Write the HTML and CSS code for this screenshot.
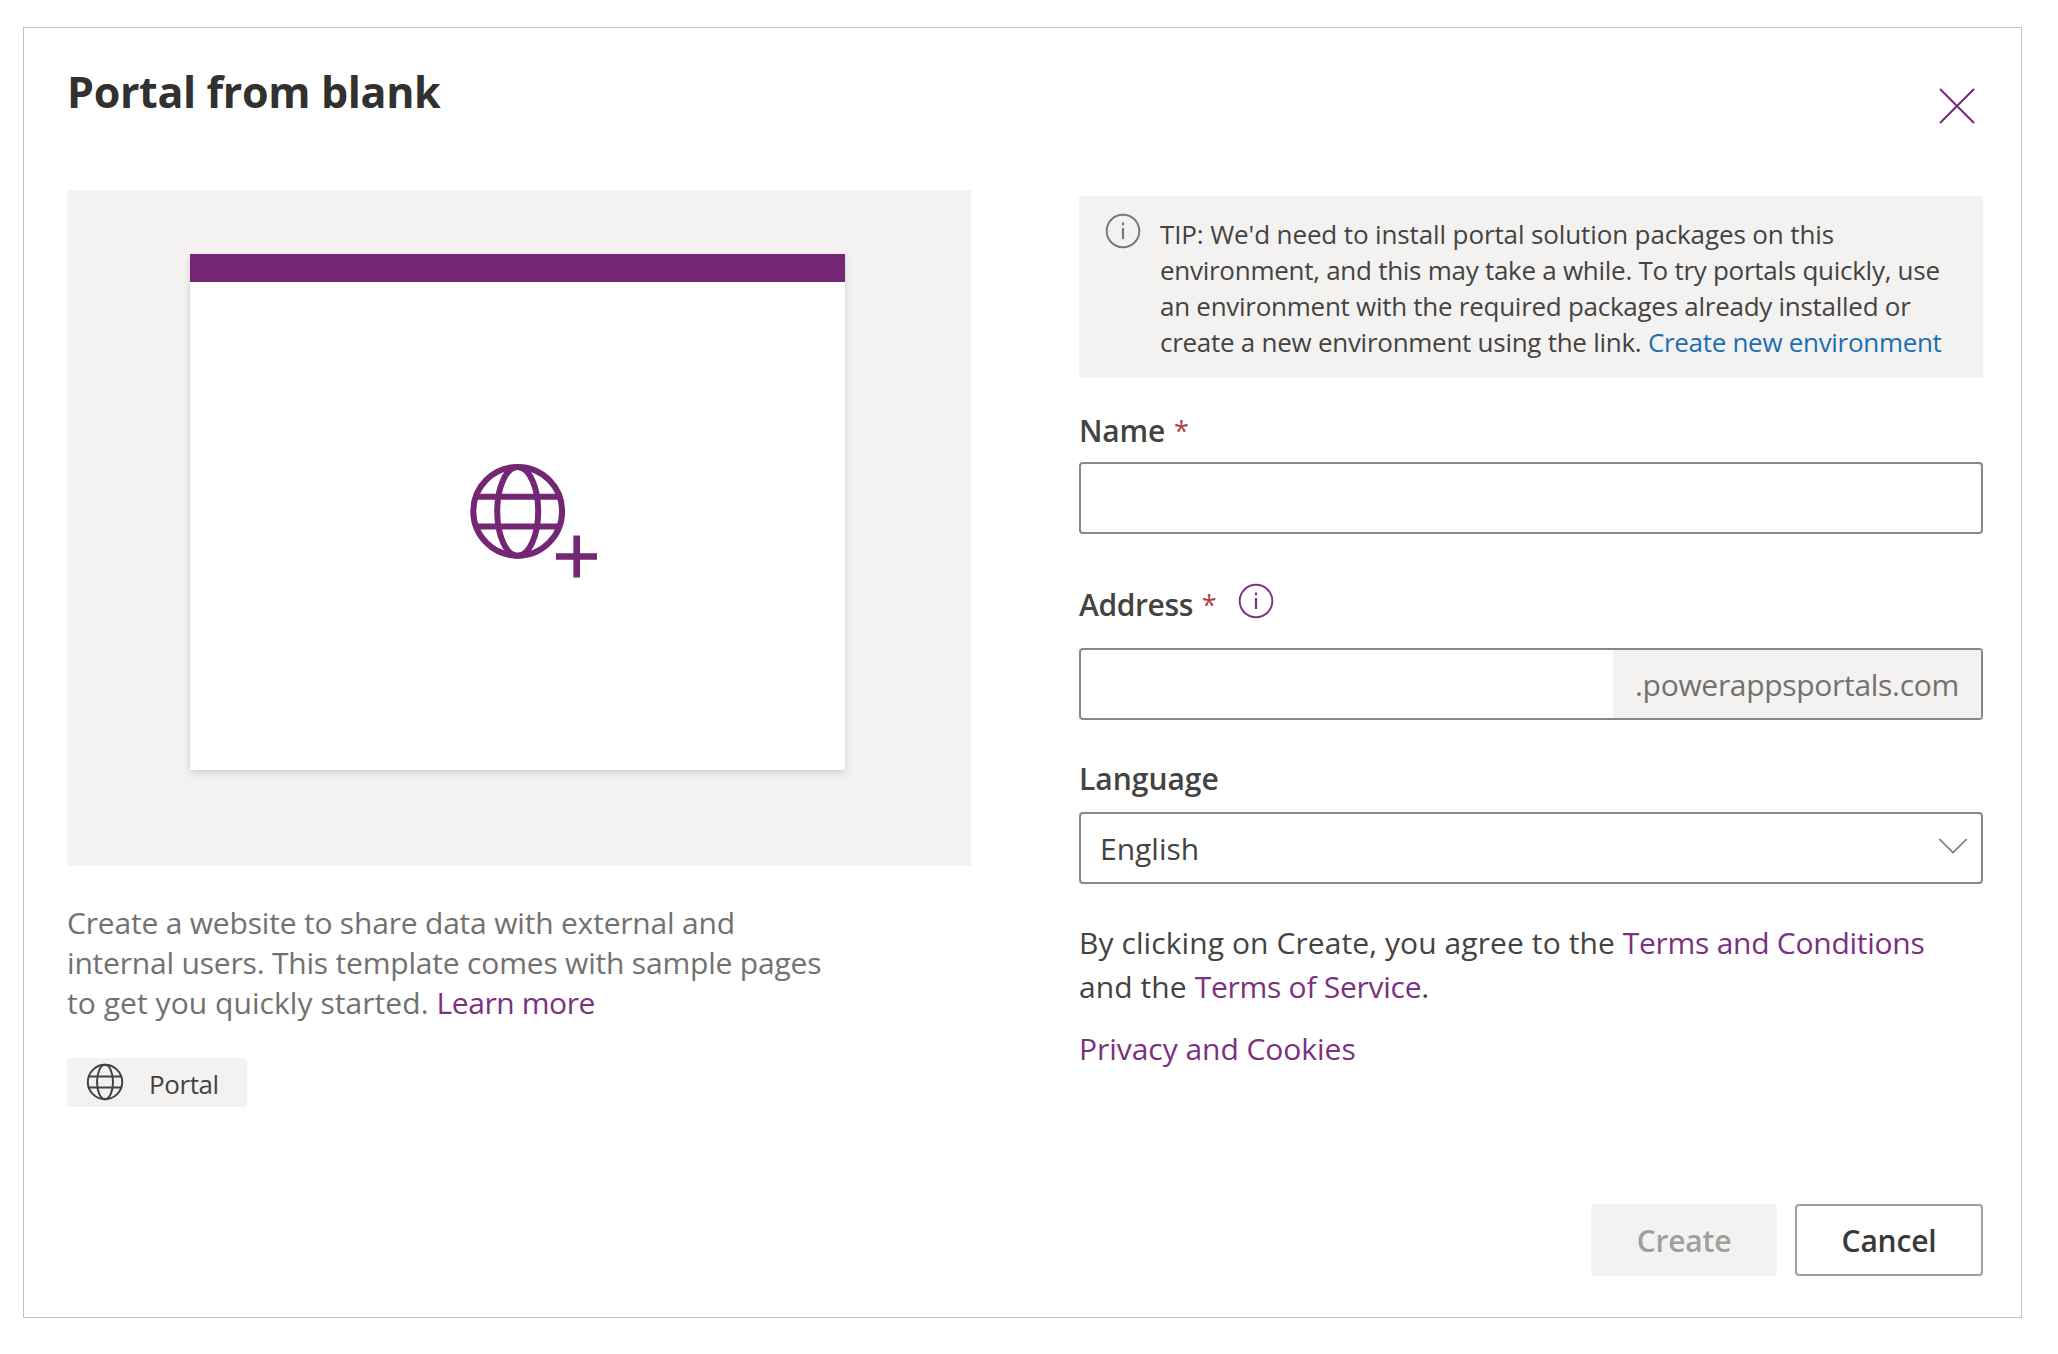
FILE: index.html
```html
<!DOCTYPE html>
<html lang="en">
<head>
<meta charset="utf-8">
<title>Portal from blank</title>
<link rel="stylesheet" href="styles.css">
</head>
<body>
<main class="dialog">
  <header class="header">
    <h1 class="title">Portal from blank</h1>
    <button class="close" aria-label="Close">
      <svg width="36" height="36" viewBox="0 0 36 36"><path d="M1 1L35 35M35 1L1 35" fill="none" stroke="currentColor" stroke-width="1.9"/></svg>
    </button>
  </header>

  <div class="columns">
    <section class="template">
      <div class="preview">
        <div class="window">
          <div class="window-bar"></div>
          <div class="window-body">
            <svg class="globe-plus" width="132" height="118" viewBox="0 0 132 118" fill="none" stroke="currentColor">
              <g stroke-width="6">
                <circle cx="49.7" cy="49.3" r="44.4"/>
                <ellipse cx="49.7" cy="49.3" rx="20.5" ry="44.4"/>
                <path d="M8 34.8H91.5M8 64.5H91.5"/>
              </g>
              <path d="M108.7 73.5V115.5M88 94.5H129" stroke-width="6.6"/>
            </svg>
          </div>
        </div>
      </div>
      <p class="description">
        <span class="line">Create a website to share data with external and</span>
        <span class="line">internal users. This template comes with sample pages</span>
        <span class="line last">to get you quickly started. <a class="link" href="#">Learn more</a></span>
      </p>
      <div class="chip">
        <svg width="38" height="38" viewBox="0 0 38 38" fill="none" stroke="currentColor" stroke-width="2">
          <circle cx="19" cy="19" r="17.2"/>
          <ellipse cx="19" cy="19" rx="8" ry="17.2"/>
          <path d="M2.8 13.5H35.2M2.8 24.5H35.2"/>
        </svg>
        <span>Portal</span>
      </div>
    </section>

    <section class="form">
      <div class="tip">
        <svg class="info" width="36" height="36" viewBox="0 0 36 36" fill="none" stroke="currentColor">
          <circle cx="18" cy="18" r="16.3" stroke-width="1.9"/>
          <path d="M18 15V26M18 9.6V12.2" stroke-width="2.2"/>
        </svg>
        <p class="tip-text">
          <span class="line first">TIP: We'd need to install portal solution packages on this</span>
          <span class="line">environment, and this may take a while. To try portals quickly, use</span>
          <span class="line">an environment with the required packages already installed or</span>
          <span class="line">create a new environment using the link. <a class="env-link" href="#">Create new environment</a></span>
        </p>
      </div>

      <div class="label name-label">Name <span class="star">*</span></div>
      <div class="field name-field"></div>

      <div class="label address-label">Address <span class="star">*</span>
        <svg class="info accent" width="36" height="36" viewBox="0 0 36 36" fill="none" stroke="currentColor">
          <circle cx="18" cy="18" r="16.3" stroke-width="1.9"/>
          <path d="M18 15V26M18 9.6V12.2" stroke-width="2.2"/>
        </svg>
      </div>
      <div class="field address-field"><span class="suffix">.powerappsportals.com</span></div>

      <div class="label language-label">Language</div>
      <div class="field select">
        <span>English</span>
        <svg width="30" height="18" viewBox="0 0 30 18"><path d="M1.2 2L15 15.5L28.8 2" fill="none" stroke="currentColor" stroke-width="1.7"/></svg>
      </div>

      <p class="terms">
        <span class="line">By clicking on Create, you agree to the <a class="link" href="#">Terms and Conditions</a></span>
        <span class="line">and the <a class="link" href="#">Terms of Service</a>.</span>
      </p>
      <p class="privacy"><a class="link" href="#">Privacy and Cookies</a></p>
    </section>
  </div>

  <footer class="actions">
    <button class="button create" disabled>Create</button>
    <button class="button cancel">Cancel</button>
  </footer>
</main>
</body>
</html>
```

FILE: styles.css
```css
* { box-sizing: border-box; }

body {
  margin: 0;
  padding: 27px 0 0 23px;
  background: #fff;
  color: #444341;
  font-family: "Open Sans", "Noto Sans", sans-serif;
  font-size: 30px;
}

h1, p { margin: 0; }
svg { display: block; flex: none; }
button { font: inherit; }
.line { display: block; white-space: nowrap; }
.link { color: #7b3180; text-decoration: none; }

.dialog {
  display: flex;
  flex-direction: column;
  width: 1999px;
  height: 1291px;
  padding: 0 38px 41px 43px;
  border: 1px solid #c3c3c3;
}

.header {
  display: flex;
  justify-content: space-between;
  align-items: flex-start;
  height: 162px;
}
.title {
  padding-top: 34px;
  color: #323130;
  font-size: 43px;
  font-weight: 700;
  line-height: 60px;
  letter-spacing: -0.36px;
}
.close {
  margin: 60px 8px 0 0;
  padding: 0;
  border: 0;
  background: none;
  color: #742774;
}

.columns { display: grid; grid-template-columns: 904px 904px; column-gap: 108px; }

.preview {
  display: flex;
  justify-content: center;
  height: 676px;
  padding: 64px 3px 0 0;
  background: #f3f2f1;
}
.window {
  display: flex;
  flex-direction: column;
  width: 655px;
  height: 516px;
  background: #fff;
  box-shadow: 0 3px 8px rgba(0, 0, 0, 0.12), 0 1px 3px rgba(0, 0, 0, 0.06);
}
.window-bar { height: 28px; background: #742774; }
.window-body { flex: 1; padding: 180px 0 0 278px; color: #742774; }

.description { margin-top: 37px; color: #737170; line-height: 40px; letter-spacing: -0.19px; }
.description .last { letter-spacing: 0.06px; }
.description .link { letter-spacing: -0.4px; }

.chip {
  display: flex;
  align-items: center;
  width: 180px;
  height: 49px;
  margin-top: 35px;
  padding-left: 19px;
  gap: 25px;
  border-radius: 4px;
  background: #f3f2f1;
  font-size: 26px;
  letter-spacing: -0.4px;
}
.chip svg { margin-top: -1px; }
.chip span { padding-top: 2px; }

.form { padding-top: 6px; }
.tip {
  display: flex;
  align-items: flex-start;
  height: 182px;
  padding: 17px 0 0 26px;
  gap: 19px;
  background: #f3f2f1;
}
.info { color: #797775; }
.tip-text { padding-top: 3px; font-size: 26px; line-height: 36px; letter-spacing: -0.27px; }
.tip-text .first { letter-spacing: -0.12px; }
.env-link { color: #1a6eb2; letter-spacing: -0.3px; text-decoration: none; }

.label { display: flex; align-items: center; height: 40px; font-weight: 600; line-height: 40px; }
.star { margin-left: 9px; color: #b04046; font-size: 27px; font-weight: 400; }
.name-label { margin-top: 33px; letter-spacing: -0.2px; }
.address-label { margin-top: 51px; letter-spacing: -0.4px; }
.address-label .info { margin: -8px 0 0 22px; }
.info.accent { color: #7b3180; }
.language-label { margin-top: 39px; letter-spacing: 0; }

.field { display: flex; height: 72px; border: 2px solid #8a8886; border-radius: 4px; }
.name-field { margin-top: 11px; }
.address-field { margin-top: 23px; justify-content: flex-end; }
.suffix {
  width: 368px;
  padding-left: 22px;
  background: #f3f2f1;
  color: #737170;
  line-height: 69px;
  letter-spacing: -0.3px;
}
.select { margin-top: 13px; justify-content: space-between; padding: 0 13px 0 19px; line-height: 69px; }
.select svg { margin-top: 23px; color: #797775; }

.terms { margin-top: 37px; line-height: 44px; letter-spacing: 0.09px; }
.terms .link { letter-spacing: -0.26px; }
.privacy { margin-top: 18px; line-height: 44px; letter-spacing: -0.04px; }

.actions { display: flex; justify-content: flex-end; gap: 18px; margin-top: auto; }
.button { height: 72px; padding: 0; border-radius: 4px; font-weight: 600; letter-spacing: -0.2px; }
.create { width: 186px; border: 0; background: #f3f2f1; color: #a19f9d; }
.cancel { width: 188px; border: 2px solid #a19f9d; background: #fff; color: #3a3938; }
```
